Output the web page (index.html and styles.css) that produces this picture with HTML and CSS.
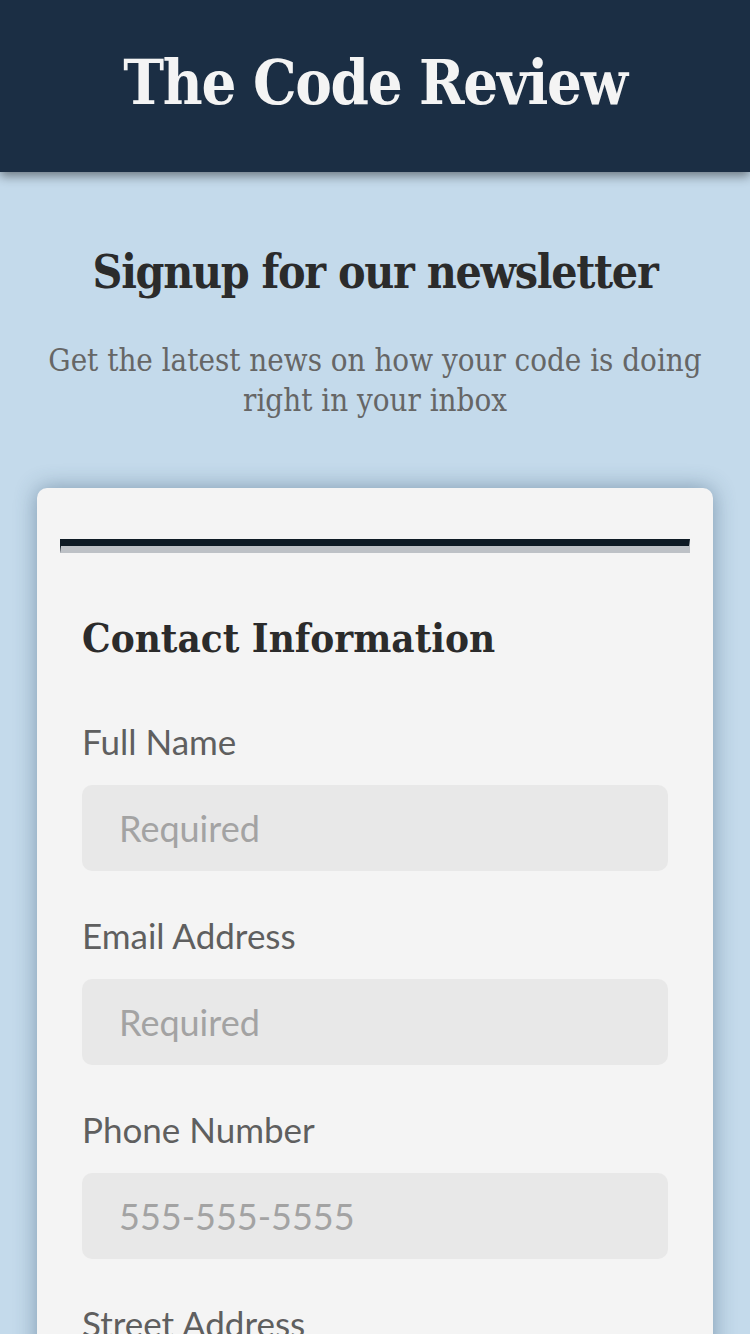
FILE: index.html
```html
<!DOCTYPE html>
<html lang="en">
<head>
<meta charset="utf-8">
<title>The Code Review</title>
<link rel="stylesheet" href="styles.css">
</head>
<body>
<header class="site-header">
  <h1 class="site-title">The Code Review</h1>
</header>
<main class="page">
  <section class="intro">
    <h2 class="intro-title">Signup for our newsletter</h2>
    <p class="intro-text">Get the latest news on how your code is doing right in your inbox</p>
  </section>
  <section class="card">
    <hr class="divider">
    <form class="form">
      <h3 class="form-title">Contact Information</h3>
      <div class="field">
        <label class="label" for="name">Full Name</label>
        <input class="input" id="name" type="text" placeholder="Required">
      </div>
      <div class="field">
        <label class="label" for="email">Email Address</label>
        <input class="input" id="email" type="email" placeholder="Required">
      </div>
      <div class="field">
        <label class="label" for="phone">Phone Number</label>
        <input class="input" id="phone" type="tel" placeholder="555-555-5555">
      </div>
      <div class="field">
        <label class="label" for="street">Street Address</label>
        <input class="input" id="street" type="text" placeholder="Required">
      </div>
    </form>
  </section>
</main>
</body>
</html>
```

FILE: styles.css
```css
* { box-sizing: border-box; }

html, body {
  margin: 0;
  padding: 0;
}

body {
  background: #c4daeb;
  font-family: "Lato", "Noto Sans", sans-serif;
  color: #5f5f5f;
}

.site-header {
  height: 172px;
  background: #1b2e44;
  display: flex;
  align-items: center;
  justify-content: center;
  box-shadow: 0 4px 10px rgba(0, 0, 0, 0.45);
  position: relative;
  z-index: 1;
}

.site-title {
  margin: 0;
  font-family: "DejaVu Serif Condensed", "DejaVu Serif", serif;
  font-weight: bold;
  font-size: 61px;
  letter-spacing: -1.3px;
  color: #f4f4f4;
  line-height: 1;
  padding-bottom: 7px;
}

.page {
  padding: 0 37px;
}

.intro {
  text-align: center;
  padding: 72px 0 0;
}

.intro-title {
  margin: 0;
  font-family: "DejaVu Serif Condensed", "DejaVu Serif", serif;
  font-weight: bold;
  font-size: 46px;
  letter-spacing: -1.3px;
  line-height: 56px;
  color: #2b2b2b;
}

.intro-text {
  margin: 40px 0 0;
  font-family: "DejaVu Serif Condensed", "DejaVu Serif", serif;
  font-size: 31px;
  line-height: 40px;
  color: #666;
}

.card {
  margin-top: 68px;
  background: #f4f4f4;
  border-radius: 10px;
  padding: 51px 23px 40px;
  box-shadow: 0 0 22px rgba(40, 70, 100, 0.45);
}

.divider {
  margin: 0;
  height: 0;
  border-style: solid;
  border-width: 7px 1px;
  border-color: #0e1a24 #bdc1c6 #bdc1c6 #0e1a24;
}

.form {
  padding: 60px 22px 0;
}

.form-title {
  margin: 0 0 56px;
  font-family: "DejaVu Serif Condensed", "DejaVu Serif", serif;
  font-weight: bold;
  font-size: 40px;
  line-height: 50px;
  color: #2b2b2b;
}

.field {
  display: flex;
  flex-direction: column;
  margin-bottom: 42px;
}

.label {
  font-size: 35px;
  line-height: 44px;
  color: #5f5f5f;
  margin-bottom: 22px;
}

.input {
  height: 86px;
  border: none;
  border-radius: 10px;
  background: #e8e8e8;
  padding: 0 37px;
  font-family: "Lato", "Noto Sans", sans-serif;
  font-size: 36px;
  color: #333;
  outline: none;
}

.input::placeholder {
  color: #a3a3a3;
}
```
